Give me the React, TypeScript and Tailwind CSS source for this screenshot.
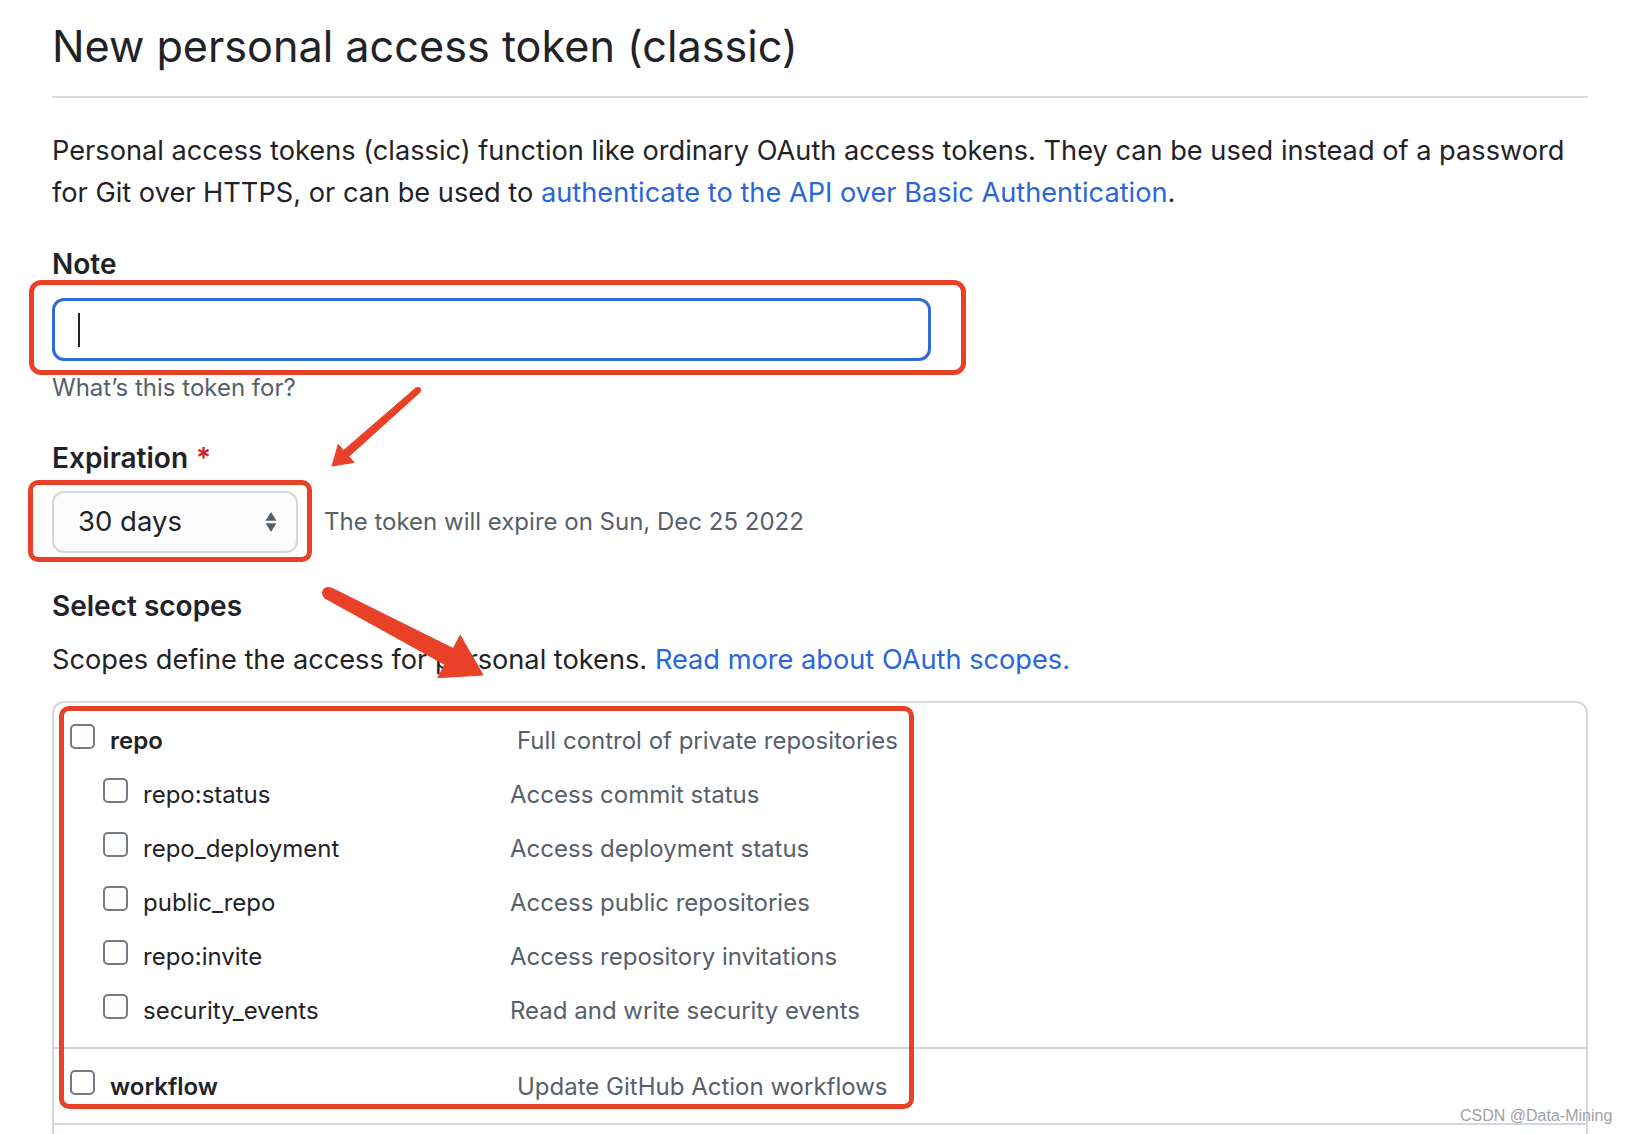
import React from "react";

type Scope = { name: string; desc: string; sub?: boolean; bold?: boolean };

const group1: Scope[] = [
  { name: "repo", desc: "Full control of private repositories", bold: true },
  { name: "repo:status", desc: "Access commit status", sub: true },
  { name: "repo_deployment", desc: "Access deployment status", sub: true },
  { name: "public_repo", desc: "Access public repositories", sub: true },
  { name: "repo:invite", desc: "Access repository invitations", sub: true },
  { name: "security_events", desc: "Read and write security events", sub: true },
];

function Checkbox() {
  return (
    <span className="mt-[10px] block h-[25px] w-[25px] shrink-0 rounded-[5px] border-2 border-[#747b84] bg-white" />
  );
}

function Row({ s }: { s: Scope }) {
  if (s.sub) {
    return (
      <div className="flex h-[54px] items-start pl-[49px]">
        <Checkbox />
        <span className="ml-[15px] w-[367px] shrink-0 leading-[54px] text-[#1f2328]">{s.name}</span>
        <span className="whitespace-nowrap leading-[54px] text-[#57606a]">{s.desc}</span>
      </div>
    );
  }
  return (
    <div className="flex h-[54px] items-start pl-[16px]">
      <Checkbox />
      <span className="ml-[15px] w-[407px] shrink-0 font-semibold leading-[54px] text-[#1f2328]">{s.name}</span>
      <span className="whitespace-nowrap leading-[54px] text-[#57606a]">{s.desc}</span>
    </div>
  );
}

export default function App() {
  return (
    <div className="relative h-[1134px] w-[1626px] overflow-hidden bg-white font-['Inter',sans-serif] text-[#1f2328]">
      <div className="pl-[52px] pr-[38px]">
        <h1 className="border-b-2 border-[#d8dee4] pb-[20px] pt-[16px] text-[43.2px] font-normal leading-[60px]">
          New personal access token (classic)
        </h1>

        <p className="mt-[32px] text-[27.2px] leading-[42px]">
          <span className="block whitespace-nowrap">
            Personal access tokens (classic) function like ordinary OAuth access tokens. They can be used instead of a password
          </span>
          <span className="block whitespace-nowrap">
            for Git over HTTPS, or can be used to{" "}
            <span className="text-[#2866d9]">authenticate to the API over Basic Authentication</span>.
          </span>
        </p>

        <div className="mt-[29px] text-[28px] font-semibold leading-[42px]">Note</div>
        <div className="mt-[13px] flex h-[63px] w-[879px] items-center rounded-[12px] border-[3px] border-[#2f6bd6] pl-[23px]">
          <span className="block h-[34px] w-[2px] bg-[#1f2328]" />
        </div>
        <div className="mt-[9px] text-[24px] leading-[36px] text-[#57606a]">What’s this token for?</div>

        <div className="mt-[31px] text-[28px] font-semibold leading-[42px]">
          Expiration <span className="ml-[1px] text-[#cf222e]">*</span>
        </div>
        <div className="mt-[12px] flex items-center">
          <div className="flex h-[62px] w-[246px] items-center justify-between rounded-[12px] border-2 border-[#d0d7de] bg-[#fcfcfd] pl-[24px] pr-[19px]">
            <span className="text-[27.5px]">30 days</span>
            <svg width="12" height="22" viewBox="0 0 12 22">
              <polygon points="0.5,9.8 11.5,9.8 6,1" fill="#57606a" />
              <polygon points="0.5,12.2 11.5,12.2 6,21" fill="#57606a" />
            </svg>
          </div>
          <span className="ml-[26px] whitespace-nowrap text-[24px] text-[#57606a]">
            The token will expire on Sun, Dec 25 2022
          </span>
        </div>

        <div className="mt-[32px] text-[28px] font-semibold leading-[42px]">Select scopes</div>
        <p className="mt-[12px] whitespace-nowrap text-[27.2px] leading-[42px]">
          Scopes define the access for personal tokens.{" "}
          <span className="text-[#2866d9]">Read more about OAuth scopes.</span>
        </p>

        <div className="mt-[20px] h-[600px] rounded-t-[12px] border-2 border-[#d0d7de] text-[24px]">
          <div className="border-b-2 border-[#d0d7de] pb-[9px] pt-[11px]">
            {group1.map((s) => (
              <Row key={s.name} s={s} />
            ))}
          </div>
          <div className="border-b-2 border-[#d0d7de] pb-[9px] pt-[11px]">
            <Row s={{ name: "workflow", desc: "Update GitHub Action workflows" }} />
          </div>
        </div>
      </div>

      {/* annotation boxes */}
      <div className="pointer-events-none absolute left-[29px] top-[280px] h-[95px] w-[937px] rounded-[12px] border-[5px] border-[#e94128]" />
      <div className="pointer-events-none absolute left-[28px] top-[480px] h-[82px] w-[284px] rounded-[10px] border-[5px] border-[#e94128]" />
      <div className="pointer-events-none absolute left-[59px] top-[706px] h-[403px] w-[855px] rounded-[10px] border-[5px] border-[#e94128]" />

      {/* arrows */}
      <svg className="pointer-events-none absolute left-0 top-0" width="1626" height="1134" viewBox="0 0 1626 1134">
        <polygon
          points="420,392.2 348.8,456.4 354.1,462.4 332,466 338.3,444.4 343.6,450.4 416,387.8"
          fill="#e94128"
          stroke="#e94128"
          strokeWidth="1"
          strokeLinejoin="round"
        />
        <circle cx="418" cy="390" r="3" fill="#e94128" />
        <polygon
          points="330.8,587.7 453.2,648.5 460.2,635.3 483,675 437.8,677.7 444.8,664.5 325.2,598.3"
          fill="#e94128"
          stroke="#e94128"
          strokeWidth="1"
          strokeLinejoin="round"
        />
        <circle cx="328" cy="593" r="6" fill="#e94128" />
      </svg>

      <div className="absolute left-[1460px] top-[1105px] whitespace-nowrap font-['Liberation_Sans',sans-serif] text-[16px] leading-[22px] text-[#9ea2a6]">
        CSDN @Data-Mining
      </div>
    </div>
  );
}
